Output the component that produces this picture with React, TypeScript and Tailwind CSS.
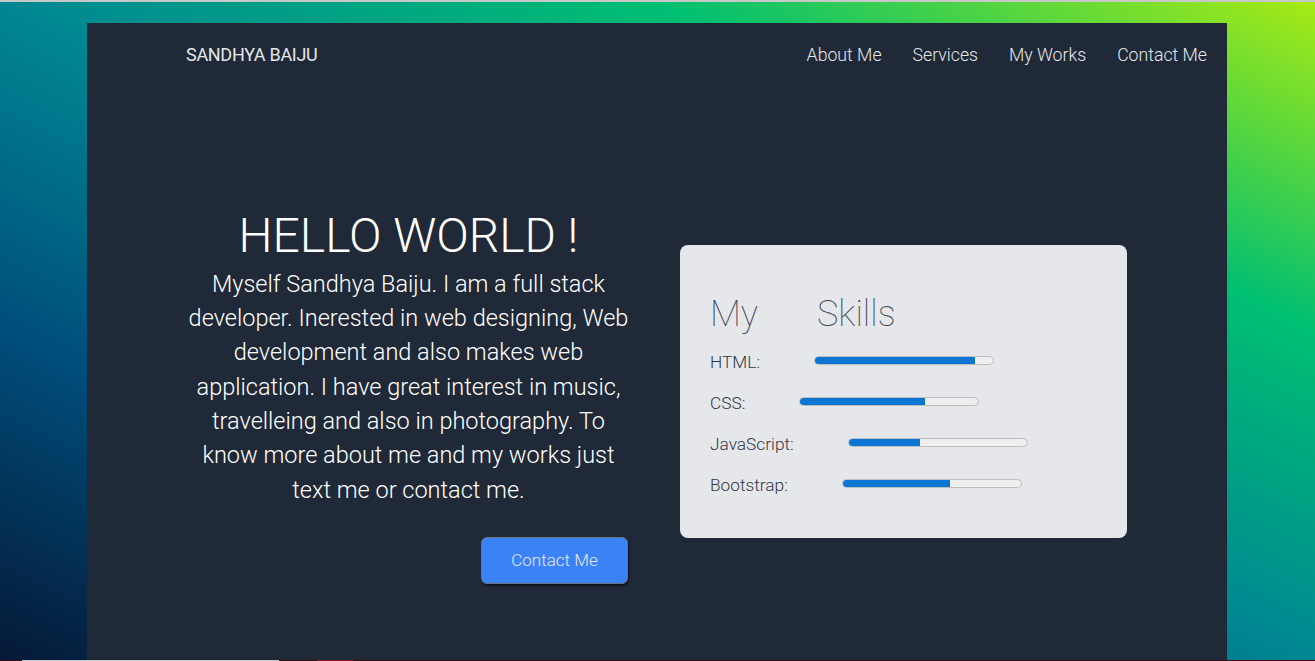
const skills = [
  { name: "HTML:", value: 90 },
  { name: "CSS:", value: 70 },
  { name: "JavaScript:", value: 40 },
  { name: "Bootstrap:", value: 60 },
];

const links = ["About Me", "Services", "My Works", "Contact Me"];

export default function App() {
  return (
    <div className="flex h-[661px] flex-col overflow-hidden font-['Roboto',sans-serif]">
      <div className="h-[2px] bg-[#c8c8c8]" />

      <div className="flex-1 bg-[linear-gradient(to_right_top,#051937,#004d7a,#008793,#00bf72,#a8eb12)] pl-[87px] pt-[21px]">
        <div className="flex h-full w-[1140px] flex-col bg-[#1f2937] pl-[99px] pr-[20px]">

          {/* Nav */}
          <nav className="flex items-center justify-between pt-[20px]">
            <a className="text-[18px] leading-6 tracking-[-0.3px] text-[#e5e7eb]">SANDHYA BAIJU</a>
            <ul className="flex gap-[31px]">
              {links.map((l) => (
                <li key={l} className="text-[17.7px] font-light leading-6 text-[#e5e7eb]">
                  {l}
                </li>
              ))}
            </ul>
          </nav>

          {/* Hero */}
          <div className="mt-[140px] flex items-start gap-[49px]">
            <div className="w-[445px] text-center text-white">
              <h1 className="text-[48px] font-light leading-[1.2]">HELLO WORLD !</h1>
              <p className="mt-[2px] text-[23.5px] font-light leading-[34.33px]">
                Myself Sandhya Baiju. I am a full stack developer. Inerested in web designing, Web
                development and also makes web application. I have great interest in music,
                travelleing and also in photography. To know more about me and my works just text me
                or contact me.
              </p>
              <div className="mt-[30px] flex justify-end pr-[3px]">
                <button className="h-[47px] w-[147px] rounded-md border border-[#6b7280] bg-[#3b82f6] text-[17px] font-light text-[#e5e7eb] shadow-[1px_2px_2px_rgba(0,0,0,0.5)]">
                  Contact Me
                </button>
              </div>
            </div>

            <div className="mt-[38px] h-[293px] w-[447px] rounded-lg bg-[#e5e7eb] pl-[30px] pt-[48px] text-[#2f3744]">
              <div className="flex gap-[59px] text-[36px] font-thin leading-[1.2] text-[#3b4452]">
                <span>My</span>
                <span>Skills</span>
              </div>
              <div className="mt-[14px] flex flex-col gap-[17px]">
                {skills.map((s) => (
                  <div key={s.name} className="flex items-center">
                    <span className="text-[17.3px] font-light leading-6">{s.name}</span>
                    <div className="mb-[3px] ml-[54px] h-[9px] w-[180px] overflow-hidden rounded-full border border-[#bdbdbd] bg-[#efefef]">
                      <div className="h-full bg-[#0b76d3]" style={{ width: `${s.value}%` }} />
                    </div>
                  </div>
                ))}
              </div>
            </div>
          </div>
        </div>
      </div>

      <div className="flex h-[1px] bg-[#3a0a0e]">
        <div className="ml-[22px] w-[257px] bg-[#c8c8c8]" />
        <div className="ml-[38px] w-[36px] bg-[#8a1a1a]" />
      </div>
    </div>
  );
}
